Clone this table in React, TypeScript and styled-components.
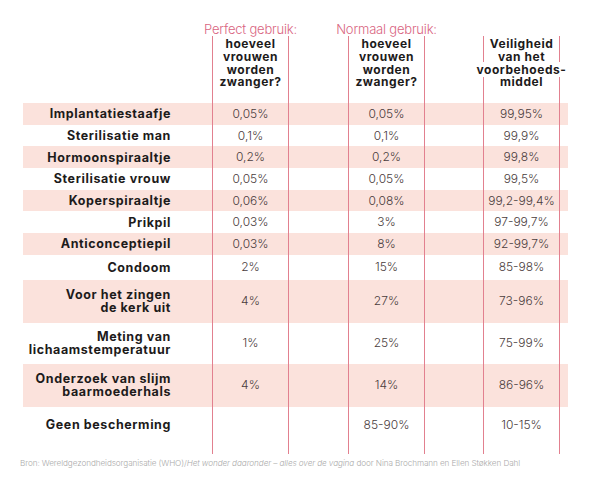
import React from "react";
import styled, { createGlobalStyle } from "styled-components";

const GlobalStyle = createGlobalStyle`
	body {
		margin: 0;
		background: #ffffff;
		font-family: "Inter", "Liberation Sans", sans-serif;
	}
`;

const COLUMNS = "189px 77px 59px 77px 58px 77px 8px";
const LINE = "#e2808f";
const STRIPE = "#fbe2dc";

type Row = {
	label: string[];
	perfect: string;
	normal: string;
	safety: string;
	height: number;
	top?: boolean;
};

const rows: Row[] = [
	{ label: ["Implantatiestaafje"], perfect: "0,05%", normal: "0,05%", safety: "99,95%", height: 21.7 },
	{ label: ["Sterilisatie man"], perfect: "0,1%", normal: "0,1%", safety: "99,9%", height: 21.7 },
	{ label: ["Hormoonspiraaltje"], perfect: "0,2%", normal: "0,2%", safety: "99,8%", height: 21.7 },
	{ label: ["Sterilisatie vrouw"], perfect: "0,05%", normal: "0,05%", safety: "99,5%", height: 21.7 },
	{ label: ["Koperspiraaltje"], perfect: "0,06%", normal: "0,08%", safety: "99,2-99,4%", height: 21.7 },
	{ label: ["Prikpil"], perfect: "0,03%", normal: "3%", safety: "97-99,7%", height: 21.7 },
	{ label: ["Anticonceptiepil"], perfect: "0,03%", normal: "8%", safety: "92-99,7%", height: 21.7 },
	{ label: ["Condoom"], perfect: "2%", normal: "15%", safety: "85-98%", height: 25 },
	{ label: ["Voor het zingen", "de kerk uit"], perfect: "4%", normal: "27%", safety: "73-96%", height: 43 },
	{ label: ["Meting van", "lichaamstemperatuur"], perfect: "1%", normal: "25%", safety: "75-99%", height: 41 },
	{ label: ["Onderzoek van slijm", "baarmoederhals"], perfect: "4%", normal: "14%", safety: "86-96%", height: 43 },
	{ label: ["Geen bescherming"], perfect: "", normal: "85-90%", safety: "10-15%", height: 47, top: true },
];

const Question = () => (
	<HeaderText>
		hoeveel
		<br />
		vrouwen
		<br />
		worden
		<br />
		zwanger?
	</HeaderText>
);

const App = () => {
	return (
		<>
			<GlobalStyle />
			<Page>
				<Table>
					<HeaderRow>
						<span />
						<HeaderCell>
							<HeaderTitle>Perfect gebruik:</HeaderTitle>
							<HeaderBox>
								<Question />
							</HeaderBox>
						</HeaderCell>
						<span />
						<HeaderCell>
							<HeaderTitle>Normaal gebruik:</HeaderTitle>
							<HeaderBox>
								<Question />
							</HeaderBox>
						</HeaderCell>
						<span />
						<HeaderCell>
							<HeaderTitle />
							<HeaderBox>
								<HeaderText>
									Veiligheid
									<br />
									van het
									<br />
									<Masked>voorbehoeds-</Masked>
									<br />
									middel
								</HeaderText>
							</HeaderBox>
						</HeaderCell>
						<span />
					</HeaderRow>
					{rows.map((row, index) => (
						<DataRow key={row.label.join(" ")} striped={index % 2 === 0} top={row.top} style={{ height: row.height }}>
							<Label>
								<LabelText>
									{row.label.map((line, i) => (
										<React.Fragment key={line}>
											{i > 0 && <br />}
											{line}
										</React.Fragment>
									))}
								</LabelText>
							</Label>
							<Value>{row.perfect}</Value>
							<span />
							<Value>{row.normal}</Value>
							<span />
							<Value>{row.safety}</Value>
							<span />
						</DataRow>
					))}
				</Table>
				<Source>
					Bron: Wereldgezondheidsorganisatie (WHO)/<em>Het wonder daaronder – alles over de vagina</em> door Nina Brochmann en Ellen Støkken Dahl
				</Source>
			</Page>
		</>
	);
};

const Page = styled.div`
	width: 600px;
	height: 496px;
	padding-top: 22px;
	box-sizing: border-box;
	overflow: hidden;
`;

const Table = styled.div`
	margin-left: 23px;
	width: 545px;
	display: flex;
	flex-direction: column;
`;

const HeaderRow = styled.div`
	display: grid;
	grid-template-columns: ${COLUMNS};
`;

const HeaderCell = styled.div`
	display: flex;
	flex-direction: column;
	align-items: stretch;
`;

const HeaderTitle = styled.div`
	height: 14px;
	line-height: 14px;
	margin: 0 -14px;
	text-align: center;
	white-space: nowrap;
	font-size: 13px;
	font-weight: 300;
	color: #d9657f;
	letter-spacing: -0.2px;
`;

const HeaderBox = styled.div`
	height: 67px;
	padding-top: 2px;
	border-left: 1px solid ${LINE};
	border-right: 1px solid ${LINE};
	box-sizing: border-box;
`;

const HeaderText = styled.div`
	margin: 0 -14px;
	text-align: center;
	white-space: nowrap;
	font-size: 12px;
	line-height: 12.8px;
	font-weight: 700;
	letter-spacing: 0.55px;
	color: #1d1b1b;
`;

const Masked = styled.span`
	background: #ffffff;
	padding: 0 1px;
`;

const DataRow = styled.div<{ striped: boolean; top?: boolean }>`
	display: grid;
	grid-template-columns: ${COLUMNS};
	align-items: stretch;
	background: ${(p) => (p.striped ? STRIPE : "transparent")};
	& > * {
		display: flex;
		flex-direction: column;
		justify-content: ${(p) => (p.top ? "flex-start" : "center")};
		padding-top: ${(p) => (p.top ? "11px" : "0")};
		box-sizing: border-box;
	}
`;

const Label = styled.div`
	padding-right: 41px;
`;

const LabelText = styled.div`
	text-align: right;
	font-size: 12.5px;
	line-height: 13.4px;
	font-weight: 700;
	letter-spacing: 0.6px;
	color: #1d1b1b;
`;

const Value = styled.div`
	border-left: 1px solid ${LINE};
	border-right: 1px solid ${LINE};
	text-align: center;
	font-size: 12px;
	line-height: 14px;
	font-weight: 300;
	color: #4a3c3c;
	white-space: nowrap;
`;

const Source = styled.div`
	margin: 4px 0 0 20px;
	font-size: 8.2px;
	line-height: 10px;
	font-weight: 300;
	color: #ababab;
	letter-spacing: -0.1px;
	white-space: nowrap;
	em {
		font-style: italic;
	}
`;

export default App;
